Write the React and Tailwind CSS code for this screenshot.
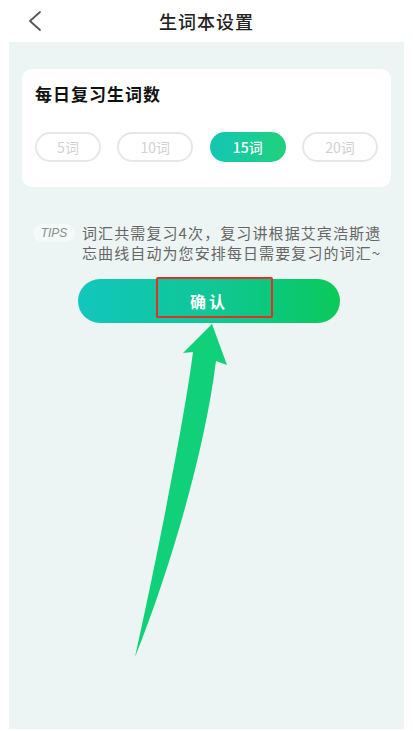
import React from "react";

const font = { fontFamily: '"Noto Sans CJK SC", "Noto Sans", sans-serif' };

function Pill({ label, active, w }) {
  if (active) {
    return (
      <div
        className={`${w} h-[30px] rounded-full flex items-center justify-center text-white text-[14px] font-medium bg-gradient-to-r from-[#14c6b4] to-[#21d17a]`}
      >
        {label}
      </div>
    );
  }
  return (
    <div
      className={`${w} h-[30px] rounded-full flex items-center justify-center border-2 border-[#e6e8e8] text-[#cfd2d2] text-[14px]`}
    >
      {label}
    </div>
  );
}

export default function App() {
  return (
    <div className="relative w-[413px] h-[731px] bg-white overflow-hidden flex flex-col" style={font}>
      {/* header */}
      <div className="h-[42px] grid grid-cols-[1fr_auto_1fr] items-center shrink-0">
        <div className="pl-[27px] flex items-center">
          <svg width="16" height="22" viewBox="0 0 16 22">
            <path d="M13 2 L3 11 L13 20" fill="none" stroke="#555" strokeWidth="1.8" strokeLinecap="round" strokeLinejoin="round" />
          </svg>
        </div>
        <div className="text-[18px] font-medium text-[#222] tracking-[1px]">生词本设置</div>
        <div />
      </div>

      {/* panel */}
      <div className="mx-[9px] mb-[2px] flex-1 bg-[#ecf5f4] flex flex-col">
        <div className="mt-[27px] mx-[13px] h-[118px] rounded-[10px] bg-white px-[13px] pt-[13px]">
          <div className="text-[17px] font-bold text-[#111] leading-[24px] tracking-[1px]">每日复习生词数</div>
          <div className="mt-[26px] flex justify-between">
            <Pill label="5词" w="w-[66px]" />
            <Pill label="10词" w="w-[76px]" />
            <Pill label="15词" w="w-[76px]" active />
            <Pill label="20词" w="w-[76px]" />
          </div>
        </div>

        <div className="mt-[36px] flex items-start pl-[24px] pr-[10px]">
          <div className="mt-[1px] w-[42px] h-[18px] rounded-full bg-[#f4f9f9] flex items-center justify-center text-[12px] italic text-[#8a8f8f] shrink-0" style={{ fontFamily: '"Liberation Sans", sans-serif' }}>
            TIPS
          </div>
          <div className="ml-[7px] text-[15px] leading-[20px] text-[#666] tracking-[1.1px]">
            <div>词汇共需复习4次，复习讲根据艾宾浩斯遗</div>
            <div>忘曲线自动为您安排每日需要复习的词汇~</div>
          </div>
        </div>

        <div className="mt-[16px] ml-[69px] w-[262px] h-[44px] relative rounded-full bg-gradient-to-r from-[#13c6bd] via-[#10c795] to-[#0cc95a] flex items-center justify-center">
          <span className="text-white text-[16px] font-bold tracking-[3px]">确认</span>
          <div className="absolute left-[78px] top-[-2px] w-[117px] h-[41px] border-2 border-[#e0302a] rounded-[2px]" />
        </div>
      </div>

      {/* annotation arrow */}
      <svg className="absolute left-0 top-0 pointer-events-none" width="413" height="731" viewBox="0 0 413 731">
        <path
          d="M212 324 L227 365 L216 361 C205 450 170 570 135 657 C150 590 183 430 193 352 L183 353 Z"
          fill="#10d07a"
        />
      </svg>
    </div>
  );
}
